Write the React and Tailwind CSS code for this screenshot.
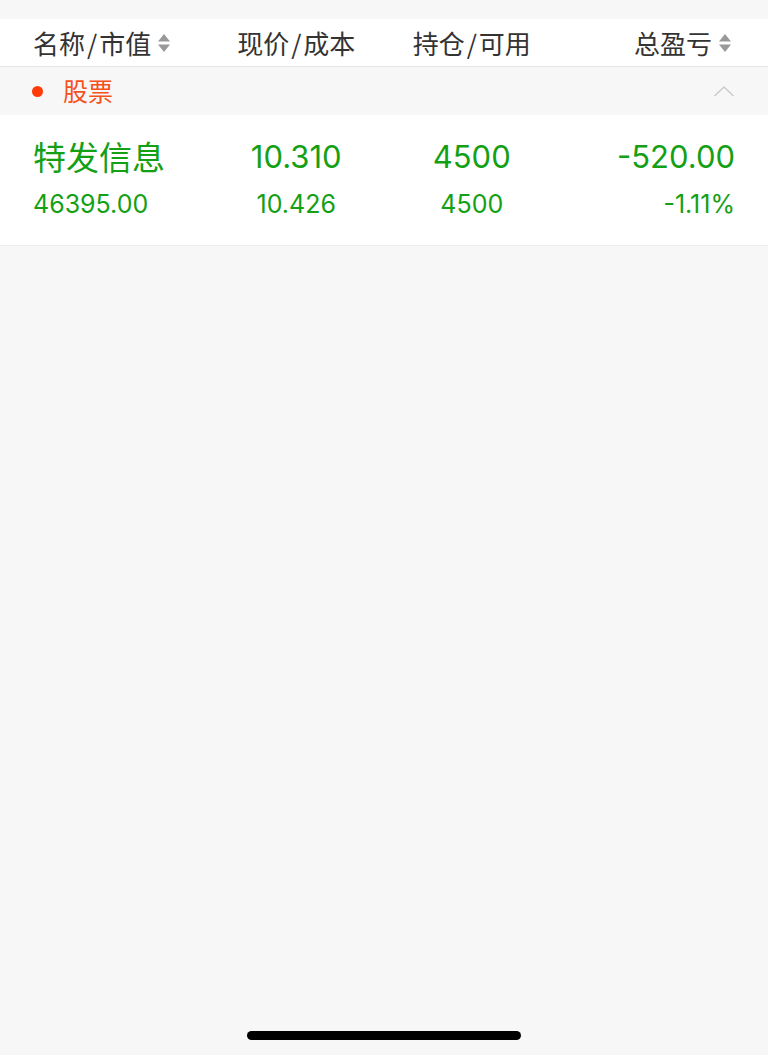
import React from "react";

const cjk = {
  fontFamily: '"Noto Sans CJK SC", "Noto Sans", sans-serif',
};
const num = {
  fontFamily: 'Inter, "Noto Sans CJK SC", sans-serif',
};

function SortIcon() {
  return (
    <svg className="w-[14px] h-[20px] ml-[6px]" viewBox="0 0 14 20" fill="#999999">
      <path d="M7 1 L13 8.5 H1 Z" />
      <path d="M7 19 L13 11.5 H1 Z" />
    </svg>
  );
}

// judul kolom dengan garis miring agak renggang
const Title = ({ a, b }) => (
  <>
    {a}
    <span className="mx-[2px]">/</span>
    {b}
  </>
);

export default function App() {
  const green = "text-[#14a014]";

  return (
    <div className="min-h-screen bg-[#f7f7f7] flex flex-col" style={cjk}>
      {/* header kolom */}
      <div className="mt-[19px] bg-white h-[48px] border-b border-[#e6e6e6] px-[33px] grid grid-cols-4 items-center text-[26px] text-[#333]">
        <div className="flex items-center">
          <Title a="名称" b="市值" />
          <SortIcon />
        </div>
        <div className="text-center">
          <Title a="现价" b="成本" />
        </div>
        <div className="text-center">
          <Title a="持仓" b="可用" />
        </div>
        <div className="flex items-center justify-end pr-[3px]">
          总盈亏
          <SortIcon />
        </div>
      </div>

      {/* grup: saham */}
      <div className="h-[48px] flex items-center justify-between pl-[32px] pr-[33px]">
        <div className="flex items-center">
          <span className="w-[11px] h-[11px] rounded-full bg-[#ff3b0a]"></span>
          <span className="ml-[20px] text-[25px] text-[#f4511e]">股票</span>
        </div>
        <svg className="w-[22px] h-[14px]" viewBox="0 0 22 14" fill="none" stroke="#cccccc" strokeWidth="1.6">
          <path d="M1.5 12 L11 3 L20.5 12" />
        </svg>
      </div>

      {/* baris posisi */}
      <div className={`bg-white border-b border-[#ececec] px-[33px] pt-[14px] pb-[20px] ${green}`}>
        <div className="grid grid-cols-4 items-center h-[56px] text-[31px]" style={num}>
          <div className="text-[33px]" style={cjk}>特发信息</div>
          <div className="text-center">10.310</div>
          <div className="text-center">4500</div>
          <div className="text-right">-520.00</div>
        </div>
        <div className="grid grid-cols-4 items-center h-[40px] text-[25px]" style={num}>
          <div>46395.00</div>
          <div className="text-center">10.426</div>
          <div className="text-center">4500</div>
          <div className="text-right">-1.11%</div>
        </div>
      </div>

      <div className="flex-1"></div>

      {/* home indicator */}
      <div className="flex justify-center pb-[15px]">
        <div className="w-[274px] h-[9px] rounded-full bg-black"></div>
      </div>
    </div>
  );
}
